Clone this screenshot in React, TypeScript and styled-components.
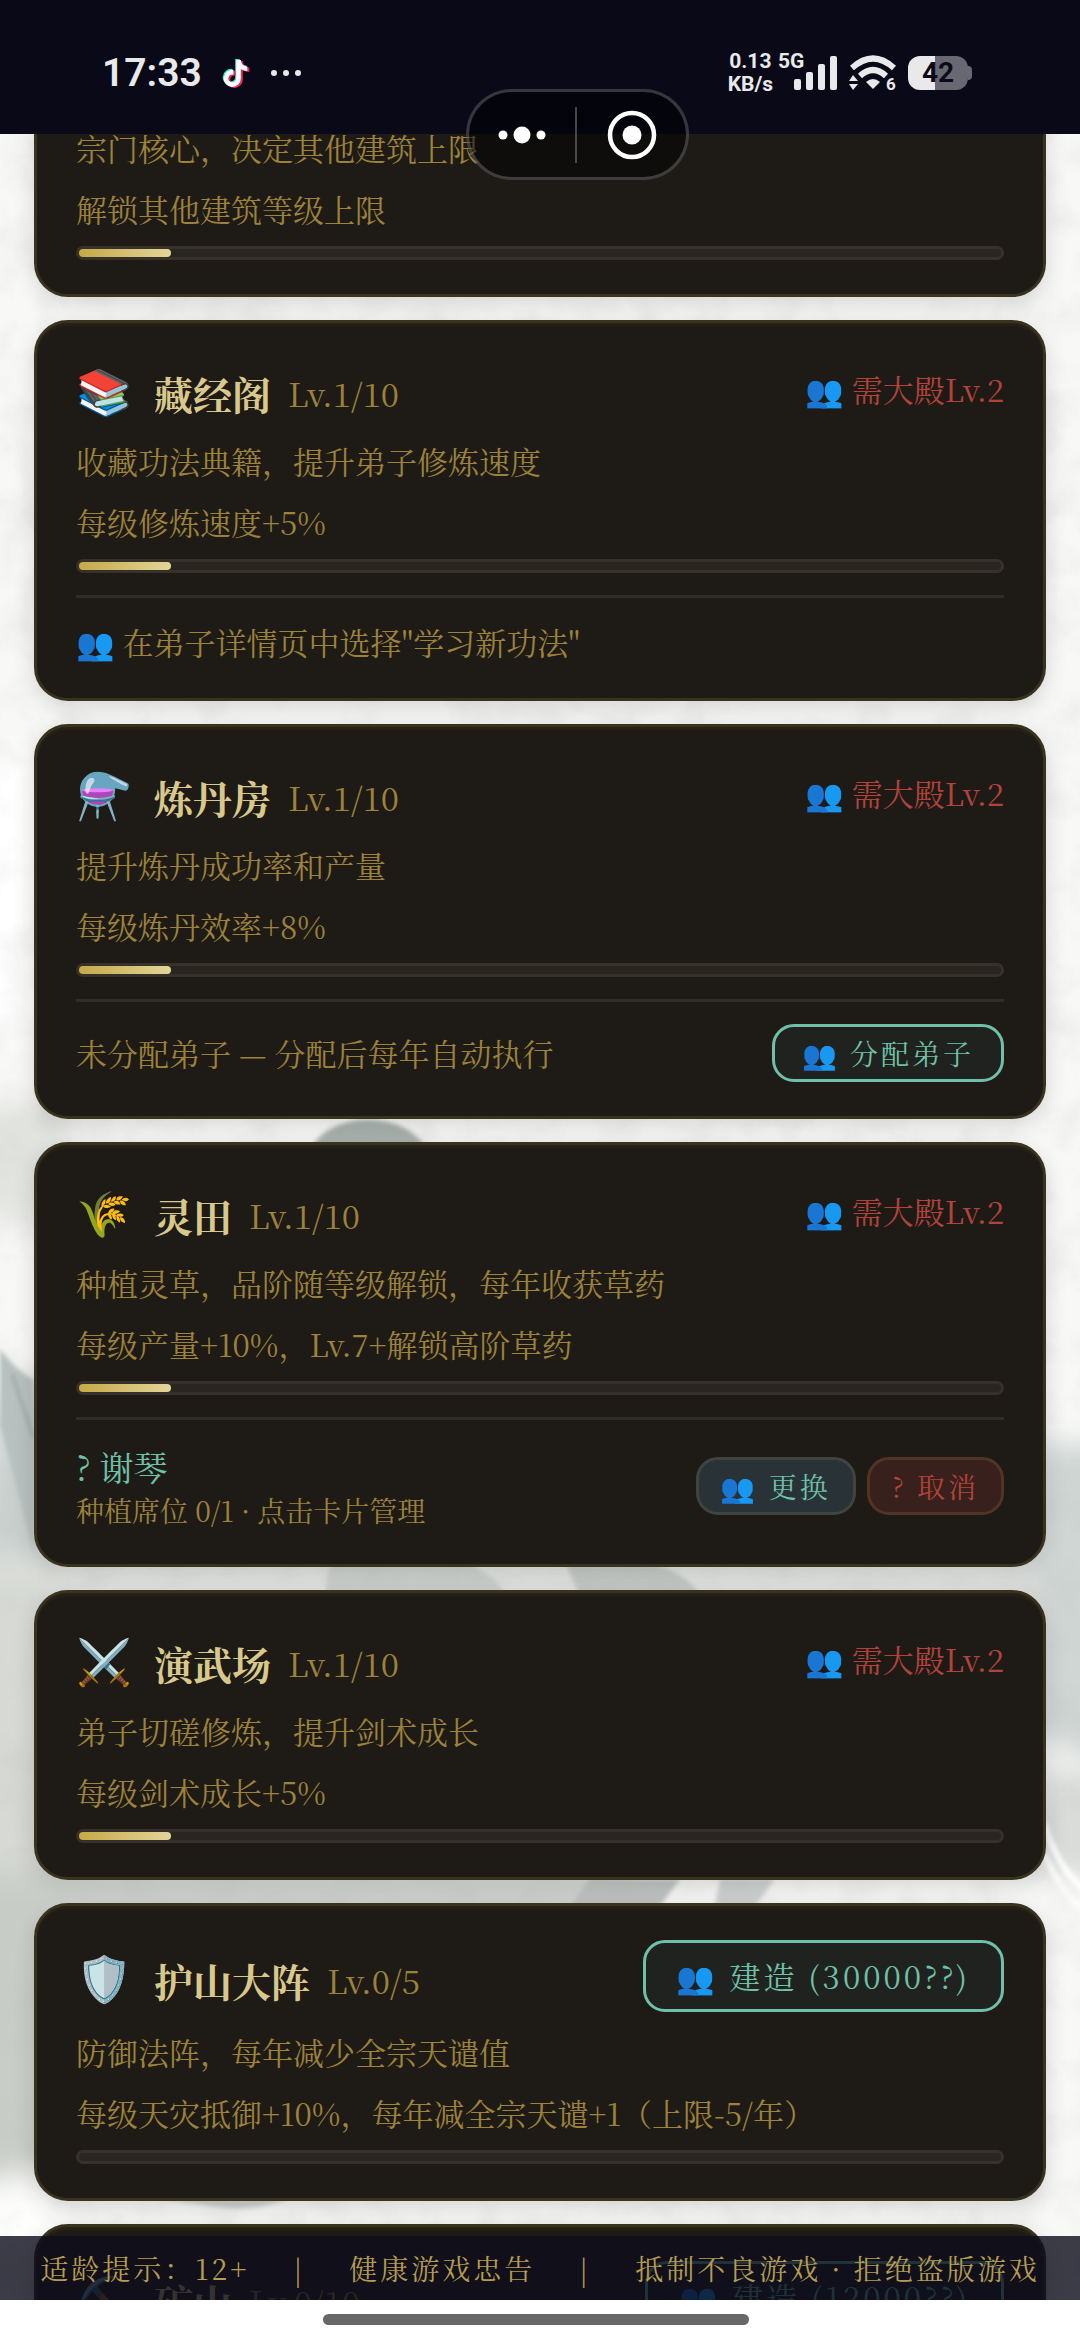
import React from 'react';
import styled, { createGlobalStyle } from 'styled-components';
import { FaTiktok } from 'react-icons/fa6';

const GlobalStyle = createGlobalStyle`
  *, *::before, *::after { box-sizing: border-box; }
  body {
    margin: 0;
    background: #fff;
    font-family: "Noto Serif CJK SC", "Noto Serif SC", "Liberation Serif", "Noto Sans CJK SC", "Noto Color Emoji", serif;
  }
  h2, p { margin: 0; font-weight: 400; }
`;

const color = {
  card: '#1e1a16',
  cardEdge: '#38321f',
  line: '#302c28',
  text: '#9c823b',
  title: '#d8c88c',
  jade: '#6fc0a8',
  red: '#b2433b',
  system: '#e9e9ec',
};

/* ---------- frame ---------- */

const Screen = styled.div`
  position: relative;
  display: flex;
  flex-direction: column;
  height: 100vh;
  overflow: hidden;
`;

const Viewport = styled.main`
  position: relative;
  flex: 1;
  min-height: 0;
  overflow: hidden;
  background: #f3f3f0;
`;

const Painting = styled.svg`
  position: absolute;
  inset: 0;
  width: 100%;
  height: 100%;
`;

const List = styled.div`
  position: relative;
  display: flex;
  flex-direction: column;
  gap: 23px;
  margin-top: -17px;
  padding: 0 34px;
`;

const HomeArea = styled.div`
  display: flex;
  flex: none;
  justify-content: center;
  height: 45px;
  padding: 14px 8px 0 0;
  background: #fff;
`;

const HomePill = styled.div`
  width: 426px;
  height: 11px;
  border-radius: 6px;
  background: #686868;
`;

/* ---------- system status bar ---------- */

const StatusBar = styled.header`
  display: flex;
  flex: none;
  align-items: center;
  justify-content: space-between;
  height: 134px;
  padding: 11px 108px 0 102px;
  background: #090918;
  color: ${color.system};
  font-family: Roboto, "Noto Sans", sans-serif;
`;

const StatusGroup = styled.div<{ $gap: number }>`
  display: flex;
  align-items: center;
  gap: ${p => p.$gap}px;
`;

const Clock = styled.time`
  font-size: 39px;
  font-weight: 600;
  line-height: 44px;
`;

const NetSpeed = styled.div`
  font-size: 21px;
  font-weight: 700;
  line-height: 23px;
  text-align: center;
`;

const Signal = styled.div`
  position: relative;
  display: flex;
  align-items: flex-end;
  width: 60px;
  height: 46px;
  padding: 0 0 6px 16px;
`;

const SignalLabel = styled.span`
  position: absolute;
  top: 0;
  left: 0;
  font-size: 21px;
  font-weight: 700;
  line-height: 23px;
`;

const Battery = styled.div`
  display: flex;
  align-items: center;
`;

const BatteryBody = styled.div`
  width: 60px;
  height: 34px;
  border-radius: 12px;
  background: linear-gradient(90deg, #e9e9ec 45%, #686873 45%);
  color: #0b0b18;
  font-size: 28px;
  font-weight: 700;
  line-height: 34px;
  text-align: center;
`;

const BatteryTip = styled.div`
  width: 4px;
  height: 14px;
  border-radius: 0 4px 4px 0;
  background: #686873;
`;

const TiktokMark = styled.span`
  position: relative;
  display: block;
  width: 26px;
  height: 28px;
  svg { position: absolute; width: 25px; height: 27px; }
  svg:nth-child(1) { left: -1px; top: 0; color: #35e6e0; }
  svg:nth-child(2) { left: 2px; top: 2px; color: #ee2a55; }
  svg:nth-child(3) { left: 0; top: 1px; color: #fff; }
`;

const Capsule = styled.div`
  position: absolute;
  top: 89px;
  left: 466px;
  display: flex;
  align-items: center;
  width: 223px;
  height: 91px;
  border: 3px solid rgba(255, 255, 255, 0.2);
  border-radius: 46px;
  background: rgba(0, 0, 0, 0.5);
`;

const CapsuleButton = styled.button`
  display: flex;
  flex: 1;
  align-items: center;
  justify-content: center;
  height: 100%;
  padding: 0;
  border: 0;
  background: none;
  &:first-child { flex: 0 0 106px; }
`;

const CapsuleRule = styled.span`
  width: 2px;
  height: 56px;
  background: rgba(255, 255, 255, 0.25);
`;

/* ---------- building cards ---------- */

const CardBox = styled.section<{ $scrolled?: boolean }>`
  padding: ${p => (p.$scrolled ? '0' : '34px')} 39px 34px;
  border: 3px solid ${color.cardEdge};
  border-top-width: ${p => (p.$scrolled ? '0' : '3px')};
  border-radius: ${p => (p.$scrolled ? '0 0 34px 34px' : '34px')};
  background: ${color.card};
  box-shadow: 0 6px 22px rgba(0, 0, 0, 0.14), inset 0 3px 2px rgba(150, 130, 30, 0.08);
`;

const CardHead = styled.div`
  display: flex;
  align-items: center;
  justify-content: space-between;
  min-height: 64px;
  margin-bottom: 9px;
`;

const Heading = styled.div`
  display: flex;
  align-items: center;
  padding-top: 8px;
`;

const Emoji = styled.span`
  margin-right: 22px;
  font-family: "Noto Color Emoji", sans-serif;
  font-size: 45px;
  line-height: 56px;
`;

const Name = styled.h2`
  margin-right: 17px;
  color: ${color.title};
  font-size: 39px;
  font-weight: 700;
  line-height: 56px;
`;

const Level = styled.span`
  color: ${color.text};
  font-size: 33px;
  line-height: 56px;
`;

const Requirement = styled.p`
  color: ${color.red};
  font-size: 31px;
  line-height: 56px;
`;

const Line = styled.p`
  color: ${color.text};
  font-size: 31px;
  line-height: 61px;
  white-space: nowrap;
`;

const Track = styled.div`
  height: 14px;
  margin-top: 7px;
  border: 3px solid #363129;
  border-radius: 7px;
  background: #292520;
`;

const Fill = styled.div`
  height: 8px;
  border-radius: 4px;
  background: linear-gradient(90deg, #c5a947, #e3d59a);
`;

const Extra = styled.div`
  display: flex;
  align-items: center;
  justify-content: space-between;
  margin-top: 22px;
  padding-top: 22px;
  border-top: 3px solid ${color.line};
`;

const Note = styled.p`
  color: ${color.text};
  font-size: 31px;
  line-height: 44px;
`;

const Disciple = styled.p`
  color: ${color.jade};
  font-size: 34px;
  line-height: 49px;
`;

const Seats = styled.p`
  color: ${color.text};
  font-size: 28px;
  line-height: 39px;
`;

const Actions = styled.div`
  display: flex;
  gap: 11px;
`;

type Tone = 'jade' | 'slate' | 'red';

const tones: Record<Tone, { edge: string; fill: string; ink: string }> = {
  jade: { edge: color.jade, fill: '#20221f', ink: color.jade },
  slate: { edge: '#40453c', fill: '#283237', ink: color.jade },
  red: { edge: '#523424', fill: '#38201c', ink: color.red },
};

const Button = styled.button<{ $tone: Tone; $size: 'small' | 'medium' | 'large' }>`
  height: ${p => (p.$size === 'large' ? 72 : 58)}px;
  padding: 0 ${p => ({ small: 22, medium: 27, large: 31 })[p.$size]}px;
  border: 3px solid ${p => tones[p.$tone].edge};
  border-radius: 22px;
  background: ${p => tones[p.$tone].fill};
  color: ${p => tones[p.$tone].ink};
  font-family: inherit;
  font-size: ${p => (p.$size === 'large' ? 31 : 28)}px;
  line-height: 48px;
  letter-spacing: 3px;
  white-space: nowrap;
`;

/* ---------- notice bar ---------- */

const Notice = styled.footer`
  position: absolute;
  right: 0;
  bottom: 0;
  left: 0;
  display: flex;
  align-items: center;
  justify-content: center;
  gap: 44px;
  height: 64px;
  background: rgba(12, 12, 28, 0.8);
  color: #b59c50;
  font-size: 28px;
  line-height: 40px;
  letter-spacing: 3px;
  white-space: nowrap;
`;

/* ---------- data ---------- */

interface Building {
  icon?: string;
  name?: string;
  level?: string;
  requires?: string;
  build?: string;
  lines: string[];
  progress?: number;
  extra?: React.ReactNode;
}

const buildings: Building[] = [
  { lines: ['宗门核心，决定其他建筑上限', '解锁其他建筑等级上限'], progress: 10 },
  {
    icon: '📚', name: '藏经阁', level: 'Lv.1/10', requires: '需大殿Lv.2',
    lines: ['收藏功法典籍，提升弟子修炼速度', '每级修炼速度+5%'], progress: 10,
    extra: <Note>👥 在弟子详情页中选择"学习新功法"</Note>,
  },
  {
    icon: '⚗️', name: '炼丹房', level: 'Lv.1/10', requires: '需大殿Lv.2',
    lines: ['提升炼丹成功率和产量', '每级炼丹效率+8%'], progress: 10,
    extra: (
      <>
        <Note>未分配弟子 — 分配后每年自动执行</Note>
        <Button type="button" $tone="jade" $size="medium">👥 分配弟子</Button>
      </>
    ),
  },
  {
    icon: '🌾', name: '灵田', level: 'Lv.1/10', requires: '需大殿Lv.2',
    lines: ['种植灵草，品阶随等级解锁，每年收获草药', '每级产量+10%，Lv.7+解锁高阶草药'], progress: 10,
    extra: (
      <>
        <div>
          <Disciple>? 谢琴</Disciple>
          <Seats>种植席位 0/1 · 点击卡片管理</Seats>
        </div>
        <Actions>
          <Button type="button" $tone="slate" $size="small">👥 更换</Button>
          <Button type="button" $tone="red" $size="small">? 取消</Button>
        </Actions>
      </>
    ),
  },
  {
    icon: '⚔️', name: '演武场', level: 'Lv.1/10', requires: '需大殿Lv.2',
    lines: ['弟子切磋修炼，提升剑术成长', '每级剑术成长+5%'], progress: 10,
  },
  {
    icon: '🛡️', name: '护山大阵', level: 'Lv.0/5', build: '建造 (30000??)',
    lines: ['防御法阵，每年减少全宗天谴值', '每级天灾抵御+10%，每年减全宗天谴+1（上限-5/年）'], progress: 0,
  },
  { icon: '⛏️', name: '矿山', level: 'Lv.0/10', build: '建造 (12000??)', lines: [] },
];

function BuildingCard({ b }: { b: Building }) {
  return (
    <CardBox $scrolled={!b.name}>
      {b.name && (
        <CardHead>
          <Heading>
            <Emoji>{b.icon}</Emoji>
            <Name>{b.name}</Name>
            <Level>{b.level}</Level>
          </Heading>
          {b.requires && <Requirement>👥 {b.requires}</Requirement>}
          {b.build && <Button type="button" $tone="jade" $size="large">👥 {b.build}</Button>}
        </CardHead>
      )}
      {b.lines.map(line => <Line key={line}>{line}</Line>)}
      {b.progress !== undefined && (
        <Track role="progressbar" aria-label="等级" aria-valuenow={b.progress} aria-valuemin={0} aria-valuemax={100}>
          {b.progress > 0 && <Fill style={{ width: `${b.progress}%` }} />}
        </Track>
      )}
      {b.extra && <Extra>{b.extra}</Extra>}
    </CardBox>
  );
}

function InkPainting() {
  return (
    <Painting viewBox="0 0 1080 2166" preserveAspectRatio="none" aria-hidden="true">
      <defs>
        <filter id="soft" x="-20%" y="-20%" width="140%" height="140%"><feGaussianBlur stdDeviation="14" /></filter>
        <filter id="wash" x="-20%" y="-20%" width="140%" height="140%"><feGaussianBlur stdDeviation="2" /></filter>
        <filter id="paper" x="0" y="0" width="100%" height="100%">
          <feTurbulence type="fractalNoise" baseFrequency="0.025" numOctaves="4" seed="8" />
          <feColorMatrix values="0 0 0 0 0.5  0 0 0 0 0.52  0 0 0 0 0.5  0 0 0 1.1 -0.46" />
        </filter>
      </defs>
      <rect width="1080" height="2166" fill="#f8f8f6" />
      <g filter="url(#soft)">
        <path d="M-40 970 H70 V1060 Q30 1120 -40 1060Z" fill="#e2e4e0" />
        <path d="M0 1270 L60 1230 V1460 H-40Z" fill="#c9d0ce" />
        <path d="M-40 1420 H1120 V1470 H-40Z" fill="#e0e2df" />
        <path d="M-40 1440 H60 V1780 H-40Z" fill="#d6d9d4" />
        <path d="M-40 1740 H620 V1780 H60 V2030 L-40 2050Z" fill="#c9cdc8" />
        <path d="M1030 1310 H1120 V1640 L1030 1600Z" fill="#d0d6d4" />
        <path d="M1030 1640 H1120 V1740 H1030Z" fill="#d9dcd9" />
        <path d="M-40 2070 H60 V2110 H-40Z" fill="#ffffff" />
        <path d="M-40 620 H34 V900 H-40Z" fill="#ffffff" />
      </g>
      <g filter="url(#wash)">
        <path d="M308 1020 Q324 986 368 986 Q412 986 430 1020Z" fill="#a9b3af" />
        <path d="M0 1215 Q18 1238 34 1246 V1420 L0 1290Z" fill="#b7c1bf" />
        <path d="M330 1430 H470 Q500 1446 505 1460 H325Z" fill="#cdd2cf" />
        <path d="M566 1430 H650 Q690 1440 700 1462 H580Z" fill="#c5cac7" />
        <path d="M590 1745 H680 L660 1772 H570Z" fill="#c0c5c2" />
        <path d="M720 1745 H775 L755 1772 H715Z" fill="#cfd3d1" />
        <path d="M155 2064 H290 Q250 2080 210 2072Z" fill="#cdd1ce" />
        <path d="M1044 1690 Q1060 1740 1090 1760 M1044 1720 Q1066 1768 1090 1780" fill="none" stroke="#ffffff" strokeWidth="6" />
        <path d="M12 1240 L34 1305" stroke="#8d9a98" strokeWidth="2" />
      </g>
      <rect width="1080" height="2166" filter="url(#paper)" opacity="0.3" />
    </Painting>
  );
}

export default function App() {
  return (
    <Screen>
      <GlobalStyle />
      <StatusBar>
        <StatusGroup $gap={21}>
          <Clock>17:33</Clock>
          <TiktokMark><FaTiktok /><FaTiktok /><FaTiktok /></TiktokMark>
          <svg width="32" height="8" viewBox="0 0 32 8" fill={color.system} aria-hidden="true">
            <circle cx="4" cy="4" r="3" /><circle cx="16" cy="4" r="3" /><circle cx="28" cy="4" r="3" />
          </svg>
        </StatusGroup>
        <StatusGroup $gap={11}>
          <StatusGroup $gap={5}>
            <NetSpeed>0.13<br />KB/s</NetSpeed>
            <Signal>
              <SignalLabel>5G</SignalLabel>
              <svg width="44" height="34" viewBox="0 0 44 34" fill={color.system} aria-hidden="true">
                <rect x="0" y="23" width="7" height="11" rx="2" />
                <rect x="12" y="16" width="7" height="18" rx="2" />
                <rect x="24" y="8" width="7" height="26" rx="2" />
                <rect x="36" y="0" width="7" height="34" rx="2" />
              </svg>
            </Signal>
          </StatusGroup>
          <svg width="48" height="36" viewBox="0 0 48 36" aria-hidden="true">
            <g fill="none" stroke={color.system} strokeWidth="6">
              <path d="M3 13 Q24 -6 45 13" />
              <path d="M11 21 Q24 9 37 21" />
            </g>
            <path d="M17 27 Q24 21 31 27 L24 34Z" fill={color.system} />
            <path d="M0 26 L4 20 L9 26Z M0 29 H9 L4 35Z" fill={color.system} />
            <text x="37" y="35" fill={color.system} fontSize="17" fontWeight="700">6</text>
          </svg>
          <Battery><BatteryBody>42</BatteryBody><BatteryTip /></Battery>
        </StatusGroup>
      </StatusBar>

      <Viewport>
        <InkPainting />
        <List>
          {buildings.map((b, i) => <BuildingCard key={i} b={b} />)}
        </List>
        <Notice>
          <span>适龄提示：12+</span>
          <span>|</span>
          <span>健康游戏忠告</span>
          <span>|</span>
          <span>抵制不良游戏 · 拒绝盗版游戏</span>
        </Notice>
      </Viewport>

      <HomeArea><HomePill /></HomeArea>

      <Capsule>
        <CapsuleButton type="button" aria-label="更多">
          <svg width="50" height="20" viewBox="0 0 50 20" fill="#fff">
            <circle cx="6" cy="10" r="4.5" /><circle cx="25" cy="10" r="8.5" /><circle cx="44" cy="10" r="4.5" />
          </svg>
        </CapsuleButton>
        <CapsuleRule />
        <CapsuleButton type="button" aria-label="关闭">
          <svg width="50" height="50" viewBox="0 0 50 50">
            <circle cx="25" cy="25" r="22" fill="none" stroke="#fff" strokeWidth="4.5" />
            <circle cx="25" cy="25" r="9.5" fill="#fff" />
          </svg>
        </CapsuleButton>
      </Capsule>
    </Screen>
  );
}
